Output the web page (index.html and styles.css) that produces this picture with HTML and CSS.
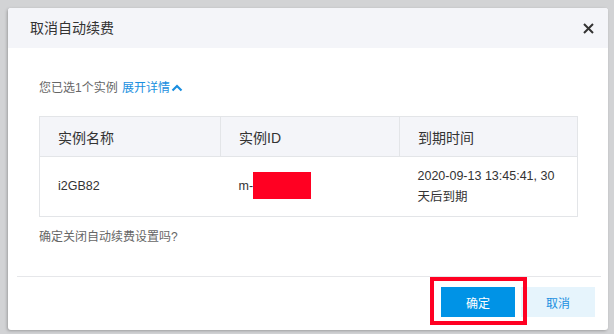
FILE: index.html
```html
<!DOCTYPE html>
<html lang="zh-CN">
<head>
    <meta charset="UTF-8">
    <title>取消自动续费</title>
    <link rel="stylesheet" href="styles.css">
</head>
<body>
    <div class="modal">
        <div class="modal-header">
            <h2>取消自动续费</h2>
            <span class="close">
                <svg width="11" height="11" viewBox="0 0 11 11">
                    <path d="M1 1 L10 10 M10 1 L1 10" stroke="#333" stroke-width="2" fill="none"/>
                </svg>
            </span>
        </div>
        <div class="modal-body">
            <p class="summary">您已选1个实例 <a class="toggle">展开详情<svg width="12" height="8" viewBox="0 0 12 8"><path d="M1.5 6.5 L6 2 L10.5 6.5" stroke="#1a8fe0" stroke-width="2.2" fill="none"/></svg></a></p>
            <table class="list">
                <thead>
                    <tr>
                        <th class="col-name">实例名称</th>
                        <th class="col-id">实例ID</th>
                        <th>到期时间</th>
                    </tr>
                </thead>
                <tbody>
                    <tr>
                        <td>i2GB82</td>
                        <td>m-<span class="redact"></span></td>
                        <td>2020-09-13 13:45:41, 30 天后到期</td>
                    </tr>
                </tbody>
            </table>
            <p class="question">确定关闭自动续费设置吗?</p>
        </div>
        <div class="modal-footer">
            <div class="confirm-wrap">
                <button class="btn btn-primary">确定</button>
                <span class="mark"></span>
            </div>
            <button class="btn btn-light">取消</button>
        </div>
    </div>
</body>
</html>
```

FILE: styles.css
```css
* {
    box-sizing: border-box;
    margin: 0;
    padding: 0;
}

body {
    font-family: "Liberation Sans", "Noto Sans CJK SC", sans-serif;
    background: #d2d3d5;
    padding: 8px 6px 0 8px;
    height: 334px;
    overflow: hidden;
}

.modal {
    width: 600px;
    background: white;
    border-radius: 3px;
    box-shadow: -1px 1px 3px rgba(0,0,0,0.25);
}

.modal-header {
    height: 40px;
    background: #f4f5f9;
    border-radius: 3px 3px 0 0;
    display: flex;
    justify-content: space-between;
    align-items: center;
    padding: 0 14px 0 22px;
}

.modal-header h2 {
    font-size: 14px;
    font-weight: normal;
    color: #333;
    line-height: 20px;
}

.close {
    display: flex;
    width: 11px;
    height: 11px;
}

.modal-body {
    padding: 30px 30px 0 31px;
}

.summary {
    font-size: 12px;
    line-height: 20px;
    color: #666;
}

.toggle {
    color: #1a8fe0;
    margin-left: 1px;
}

.toggle svg {
    margin-left: 1px;
    vertical-align: 0;
}

.list {
    width: 539px;
    margin-top: 18px;
    border-collapse: collapse;
    border: 1px solid #e3e5e8;
    table-layout: fixed;
}

.list th,
.list td {
    text-align: left;
    padding: 0 18px;
    vertical-align: middle;
}

.list th {
    height: 40px;
    background: #f4f5f9;
    font-size: 14px;
    font-weight: normal;
    color: #333;
    border-bottom: 1px solid #e3e5e8;
    border-right: 1px solid #e3e5e8;
}

.list .col-name {
    width: 181px;
}

.list .col-id {
    width: 179px;
}

.list td {
    height: 60px;
    font-size: 12.5px;
    line-height: 21px;
    color: #333;
}

.redact {
    display: inline-block;
    width: 58px;
    height: 27px;
    background: #ff0022;
    vertical-align: middle;
    margin-top: -3px;
}

.question {
    margin-top: 10px;
    font-size: 12px;
    line-height: 20px;
    color: #666;
}

.modal-footer {
    margin: 29px 7px 0 9px;
    border-top: 1px solid #e6e7ea;
    display: flex;
    justify-content: flex-end;
    gap: 6px;
    padding: 10px 6px 13px 0;
}

.confirm-wrap {
    position: relative;
}

.btn {
    display: block;
    width: 74px;
    height: 30px;
    border: none;
    font-family: inherit;
    font-size: 12px;
    cursor: pointer;
}

.btn-primary {
    background: #0093e6;
    color: white;
}

.btn-light {
    background: #e6f4fc;
    color: #1a8fe0;
}

.mark {
    position: absolute;
    left: -11px;
    right: -12px;
    top: -10px;
    bottom: -8px;
    border: 4px solid #ff0022;
}
```
